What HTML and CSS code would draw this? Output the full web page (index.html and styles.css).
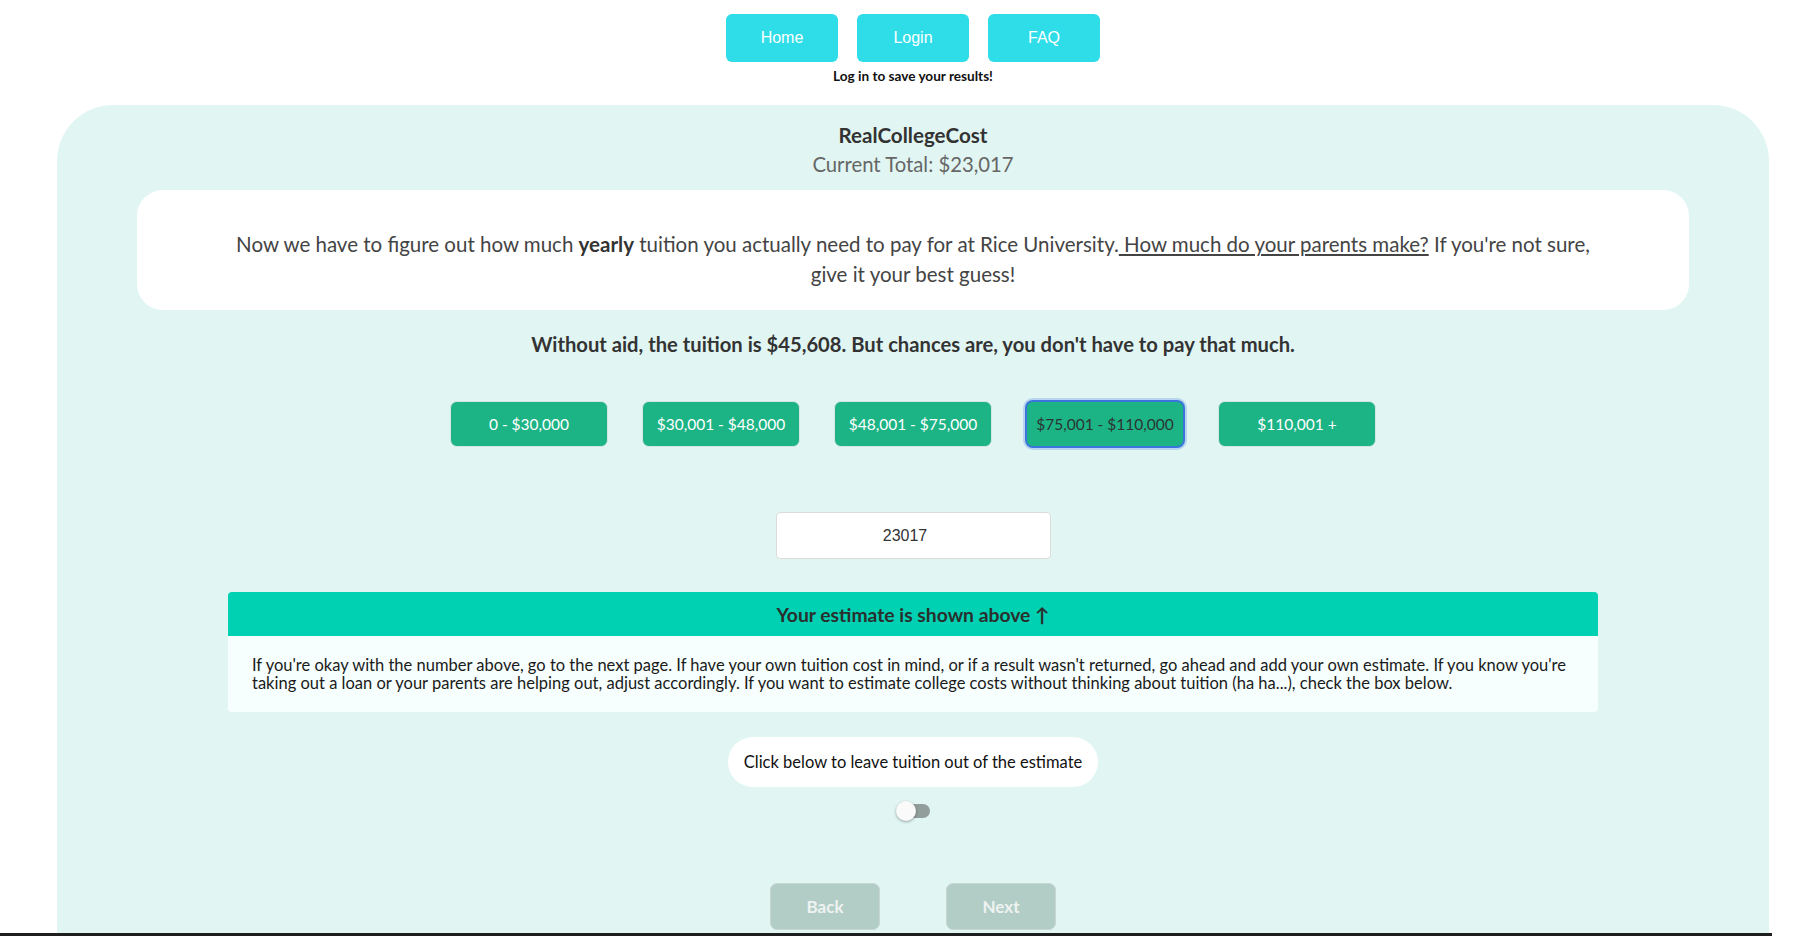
FILE: index.html
```html
<!DOCTYPE html>
<html lang="en">
<head>
<meta charset="utf-8">
<title>RealCollegeCost</title>
<link rel="stylesheet" href="styles.css">
</head>
<body>
<div class="page">
  <header class="top">
    <nav class="nav">
      <a class="nav-btn" href="#">Home</a>
      <a class="nav-btn" href="#">Login</a>
      <a class="nav-btn" href="#">FAQ</a>
    </nav>
    <p class="login-note">Log in to save your results!</p>
  </header>

  <main class="panel">
    <h1 class="title">RealCollegeCost</h1>
    <p class="total">Current Total: $23,017</p>

    <div class="card">
      <p>Now we have to figure out how much <b>yearly</b> tuition you actually need to pay for at Rice University.<a href="#" class="q-link"> How much do your parents make?</a> If you're not sure, give it your best guess!</p>
    </div>

    <p class="no-aid">Without aid, the tuition is $45,608. But chances are, you don't have to pay that much.</p>

    <div class="income-row">
      <button class="income-btn">0 - $30,000</button>
      <button class="income-btn">$30,001 - $48,000</button>
      <button class="income-btn">$48,001 - $75,000</button>
      <button class="income-btn is-focused">$75,001 - $110,000</button>
      <button class="income-btn">$110,001 +</button>
    </div>

    <input class="estimate-input" type="text" value="23017">

    <article class="message">
      <div class="message-header">Your estimate is shown above ↑</div>
      <div class="message-body">If you're okay with the number above, go to the next page. If have your own tuition cost in mind, or if a result wasn't returned, go ahead and add your own estimate. If you know you're taking out a loan or your parents are helping out, adjust accordingly. If you want to estimate college costs without thinking about tuition (ha ha...), check the box below.</div>
    </article>

    <div class="pill">Click below to leave tuition out of the estimate</div>

    <label class="toggle">
      <span class="track"></span>
      <span class="knob"></span>
    </label>

    <div class="step-row">
      <button class="step-btn">Back</button>
      <button class="step-btn">Next</button>
    </div>
  </main>
  <div class="bottom-line"></div>
</div>
</body>
</html>
```

FILE: styles.css
```css
* { box-sizing: border-box; }

html, body {
  margin: 0;
  padding: 0;
  background: #ffffff;
  overflow: hidden;
}

body {
  font-family: "Lato", "Open Sans", sans-serif;
  color: #333;
}

.page {
  position: relative;
  width: 1798px;
  height: 936px;
  overflow: hidden;
  padding-left: 57px;
}

.top {
  width: 1712px;
  display: flex;
  flex-direction: column;
  align-items: center;
  padding-top: 14px;
}

.nav {
  display: flex;
  gap: 19px;
}

.nav-btn {
  width: 112px;
  height: 48px;
  border-radius: 6px;
  background: #2edde8;
  color: #fff;
  font-family: "Liberation Sans", Arial, sans-serif;
  font-size: 16px;
  display: flex;
  align-items: center;
  justify-content: center;
  text-decoration: none;
}

.login-note {
  margin: 6px 0 0;
  font-size: 13.6px;
  font-weight: 700;
  line-height: 16px;
  color: #111;
}

.panel {
  margin-top: 21px;
  width: 1712px;
  height: 900px;
  background: #e1f6f3;
  border-radius: 56px 56px 0 0;
  padding: 18px 80px 0;
  display: flex;
  flex-direction: column;
  align-items: center;
}

.title {
  margin: 0;
  font-size: 20.6px;
  line-height: 24px;
  font-weight: 700;
  color: #333;
}

.total {
  margin: 5px 0 0;
  font-size: 20.3px;
  line-height: 24px;
  color: #666;
}

.card {
  margin-top: 14px;
  width: 100%;
  height: 120px;
  background: #fff;
  border-radius: 26px;
  padding: 39px 92px 0;
  text-align: center;
}

.card p {
  margin: 0;
  font-size: 20.5px;
  line-height: 30px;
  color: #444;
}

.card b { color: #333; }

.q-link {
  color: #444;
  text-decoration: underline;
}

.no-aid {
  margin: 22px 0 0;
  font-size: 20.2px;
  line-height: 24px;
  font-weight: 700;
  color: #333;
}

.income-row {
  margin-top: 45px;
  display: flex;
  gap: 34px;
}

.income-btn {
  width: 158px;
  height: 46px;
  border: 1px solid #d5e5e0;
  border-radius: 7px;
  background: #1cb385;
  color: #fff;
  font-family: "Lato", "Open Sans", sans-serif;
  font-size: 15.5px;
  padding: 0;
}

.income-btn.is-focused {
  color: #2b3533;
  border: 1px solid #3a74dc;
  box-shadow: 0 0 0 1px #3a74dc, 0 0 0 3px rgba(58, 116, 220, 0.25);
}

.estimate-input {
  margin-top: 65px;
  width: 275px;
  height: 47px;
  border: 1px solid #dcdcdc;
  border-radius: 4px;
  background: #fff;
  text-align: center;
  padding: 0 16px 0 0;
  font-family: "Liberation Sans", Arial, sans-serif;
  font-size: 16px;
  color: #333;
}

.message {
  margin-top: 33px;
  width: 1370px;
  border-radius: 4px;
  overflow: hidden;
}

.message-header {
  height: 44px;
  background: #00d1b2;
  color: #2a2f2e;
  font-size: 19.3px;
  font-weight: 700;
  display: flex;
  align-items: center;
  justify-content: center;
}

.message-body {
  background: #f6fffd;
  padding: 20px 24px;
  font-size: 16.5px;
  line-height: 18px;
  color: #1a1a1a;
}

.pill {
  margin-top: 25px;
  height: 50px;
  padding: 0 16px;
  border-radius: 25px;
  background: #fff;
  display: flex;
  align-items: center;
  font-size: 16.5px;
  color: #111;
}

.toggle {
  margin-top: 14px;
  position: relative;
  width: 34px;
  height: 20px;
  display: block;
}

.track {
  position: absolute;
  left: 3px;
  top: 3px;
  width: 31px;
  height: 14px;
  border-radius: 7px;
  background: #929e9b;
}

.knob {
  position: absolute;
  left: 0;
  top: 0;
  width: 20px;
  height: 20px;
  border-radius: 50%;
  background: #fafafa;
  box-shadow: 0 1px 3px rgba(0, 0, 0, 0.35);
}

.step-row {
  margin-top: 62px;
  display: flex;
  gap: 66px;
}

.step-btn {
  width: 110px;
  height: 47px;
  border: 1px solid #c9d6d2;
  border-radius: 7px;
  background: #b2cdc6;
  color: #eef3f1;
  font-family: "Lato", "Open Sans", sans-serif;
  font-size: 17px;
  font-weight: 700;
  padding: 0;
}

.bottom-line {
  position: absolute;
  left: 0;
  bottom: 0;
  width: 1772px;
  height: 3px;
  background: #1e1e1e;
}
```
